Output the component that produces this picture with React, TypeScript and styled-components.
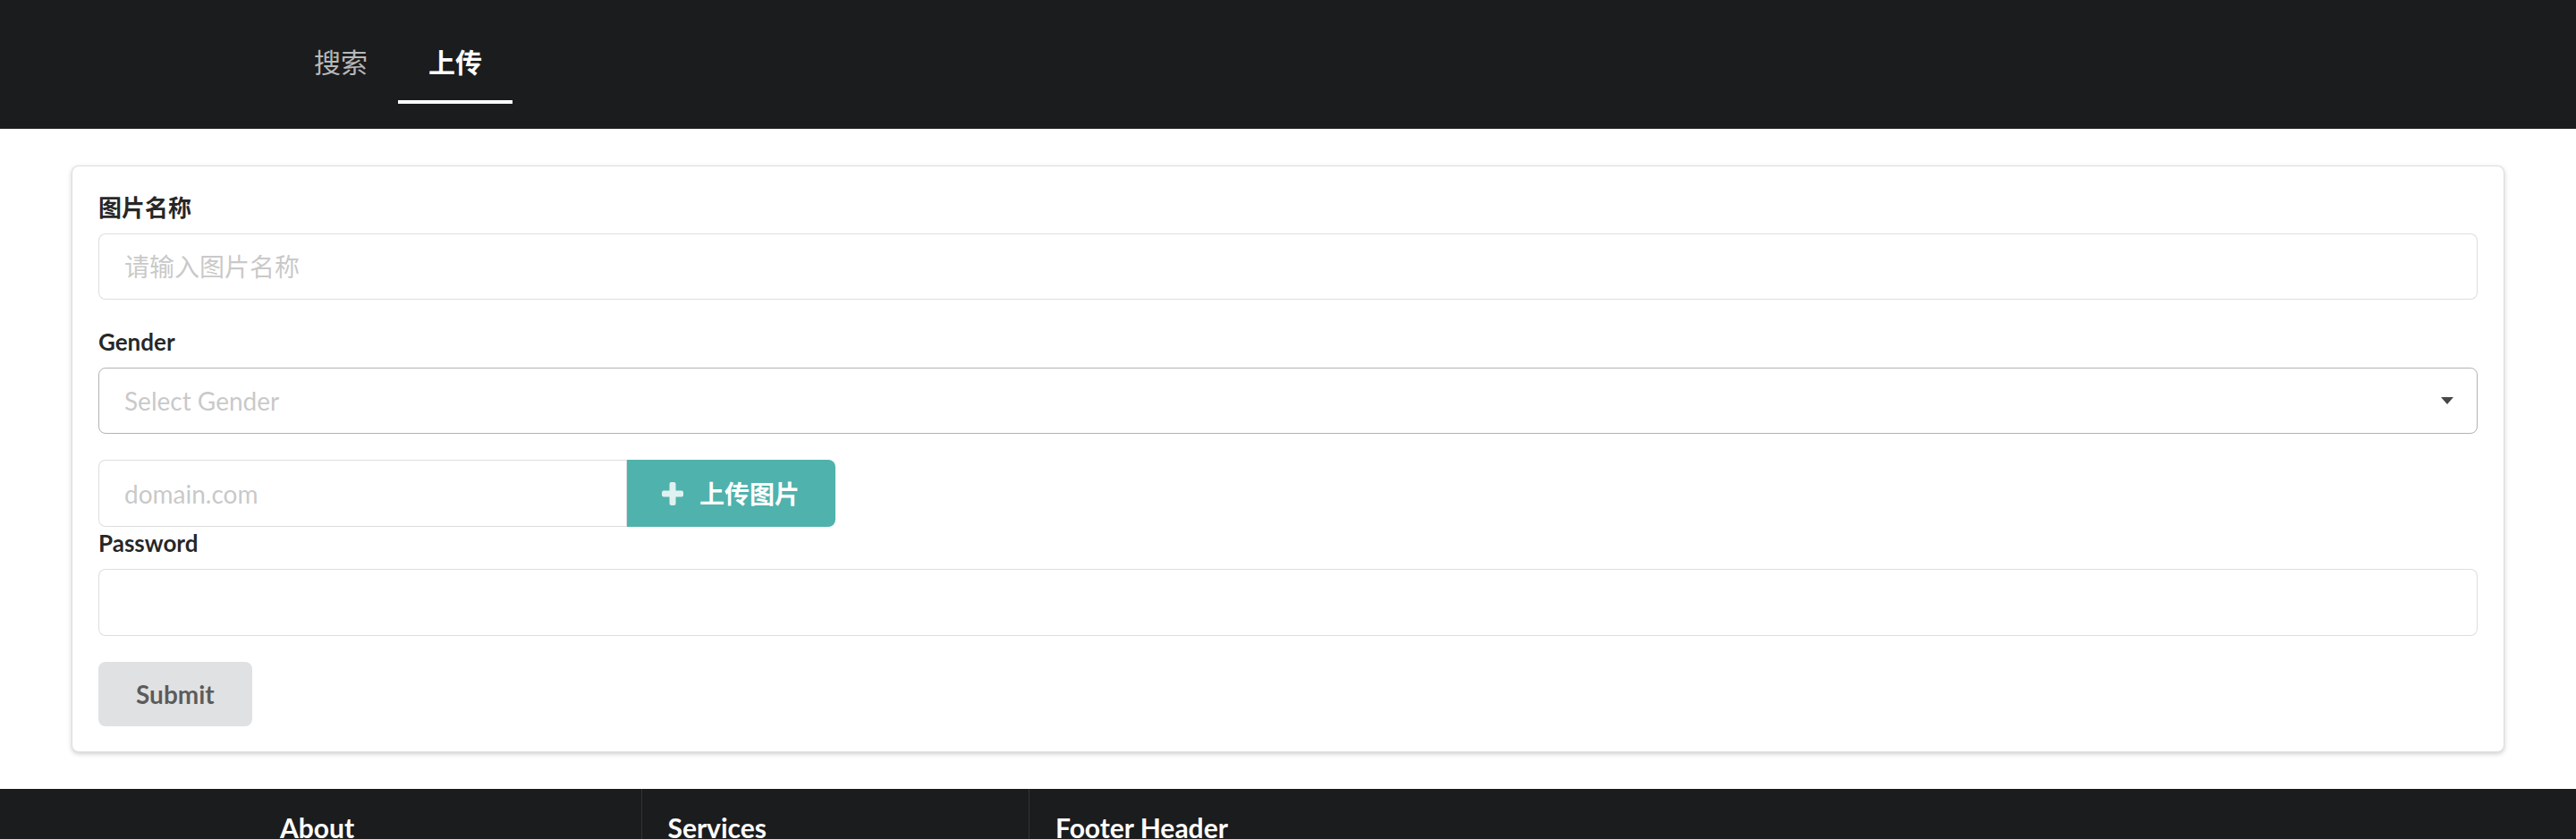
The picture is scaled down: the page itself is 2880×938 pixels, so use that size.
import React from "react";
import styled, { createGlobalStyle } from "styled-components";

const GlobalStyle = createGlobalStyle`
  html, body {
    margin: 0;
    padding: 0;
    background: #ffffff;
  }
  body {
    font-family: Lato, "Noto Sans CJK SC", "Noto Sans", sans-serif;
    font-size: 28px;
    color: rgba(0, 0, 0, 0.87);
  }
  * { box-sizing: border-box; }
`;

const Header = styled.header`
  background: #1b1c1d;
  height: 144px;
`;

const HeaderInner = styled.nav`
  width: 2246px;
  margin: 0 auto;
  display: flex;
  align-items: flex-start;
`;

const Tab = styled.a<{ $active?: boolean }>`
  display: block;
  padding: 54px 34px 28px;
  font-size: 30px;
  line-height: 30px;
  font-weight: ${(p) => (p.$active ? 700 : 400)};
  color: ${(p) => (p.$active ? "#ffffff" : "rgba(255,255,255,0.7)")};
  border-bottom: 4px solid ${(p) => (p.$active ? "#ffffff" : "transparent")};
  cursor: pointer;
`;

const Main = styled.main`
  padding: 41px 80px 41px;
`;

const Card = styled.form`
  background: #fff;
  border: 1px solid rgba(34, 36, 38, 0.15);
  border-radius: 8px;
  box-shadow: 0 2px 4px 0 rgba(34, 36, 38, 0.12), 0 2px 6px 0 rgba(34, 36, 38, 0.1);
  padding: 28px 29px;
  display: flex;
  flex-direction: column;
`;

const Field = styled.div<{ $gap?: number }>`
  display: flex;
  flex-direction: column;
  margin-bottom: ${(p) => (p.$gap ?? 29)}px;
`;

const Label = styled.label`
  display: block;
  font-size: 26px;
  line-height: 37px;
  font-weight: 700;
  color: rgba(0, 0, 0, 0.87);
  margin-bottom: 10px;
`;

const TextInput = styled.input<{ $attached?: boolean; $height?: number }>`
  width: 100%;
  height: ${(p) => p.$height ?? 74}px;
  font-family: inherit;
  font-size: 28px;
  line-height: 34px;
  padding: 19px 28px;
  border: 1px solid rgba(34, 36, 38, 0.15);
  border-radius: ${(p) => (p.$attached ? "8px 0 0 8px" : "8px")};
  color: rgba(0, 0, 0, 0.87);
  background: #fff;
  outline: none;
  &::placeholder {
    color: rgba(191, 191, 191, 0.87);
  }
`;

const Select = styled.div`
  position: relative;
  height: 74px;
  border: 1px solid rgba(34, 36, 38, 0.35);
  border-radius: 8px;
  padding: 22px 59px 22px 28px;
  font-size: 28px;
  line-height: 28px;
  color: rgba(191, 191, 191, 0.87);
  display: flex;
  align-items: center;
`;

const Caret = styled.svg`
  position: absolute;
  right: 26px;
  top: 32px;
  width: 14px;
  height: 9px;
`;

const ActionRow = styled.div`
  display: flex;
  width: 824px;
`;

const TealButton = styled.button`
  flex: 0 0 auto;
  display: flex;
  align-items: center;
  gap: 18px;
  height: 75px;
  padding: 0 40px 0 39px;
  border: none;
  border-radius: 0 8px 8px 0;
  background: #50b2ac;
  color: #ffffff;
  font-family: inherit;
  font-size: 28px;
  font-weight: 700;
  line-height: 28px;
  cursor: pointer;
`;

const PlusIcon = styled.svg`
  width: 24px;
  height: 26px;
  opacity: 0.82;
`;

const SubmitButton = styled.button`
  align-self: flex-start;
  height: 72px;
  padding: 0 42px;
  border: none;
  border-radius: 8px;
  background: #e0e1e2;
  color: rgba(0, 0, 0, 0.6);
  font-family: inherit;
  font-size: 28px;
  font-weight: 700;
  line-height: 28px;
  cursor: pointer;
`;

const Footer = styled.footer`
  background: #1b1c1d;
  min-height: 300px;
`;

const FooterGrid = styled.div`
  width: 2312px;
  margin: 0 auto;
  display: grid;
  grid-template-columns: 3fr 3fr 7fr 3fr;
  min-height: 300px;
`;

const FooterColumn = styled.div<{ $divided?: boolean }>`
  padding: 24px 29px;
  box-shadow: ${(p) => (p.$divided ? "-1px 0 0 0 rgba(255,255,255,0.1)" : "none")};
`;

const FooterHeading = styled.h4`
  margin: 0;
  font-size: 30px;
  line-height: 38px;
  font-weight: 700;
  color: #ffffff;
`;

export default function App() {
  return (
    <>
      <GlobalStyle />
      <Header>
        <HeaderInner>
          <Tab>搜索</Tab>
          <Tab $active>上传</Tab>
        </HeaderInner>
      </Header>
      <Main>
        <Card onSubmit={(e) => e.preventDefault()}>
          <Field>
            <Label>图片名称</Label>
            <TextInput placeholder="请输入图片名称" />
          </Field>
          <Field>
            <Label>Gender</Label>
            <Select>
              Select Gender
              <Caret viewBox="0 0 14 9">
                <path d="M0 0 H14 L7 8 Z" fill="#474747" />
              </Caret>
            </Select>
          </Field>
          <Field $gap={0}>
            <ActionRow>
              <TextInput $attached $height={75} placeholder="domain.com" />
              <TealButton type="button">
                <PlusIcon viewBox="0 0 24 26">
                  <rect x="8.5" y="0" width="7" height="26" rx="2" fill="#ffffff" />
                  <rect x="0" y="9.5" width="24" height="7" rx="2" fill="#ffffff" />
                </PlusIcon>
                上传图片
              </TealButton>
            </ActionRow>
          </Field>
          <Field $gap={29}>
            <Label>Password</Label>
            <TextInput type="password" $height={75} />
          </Field>
          <SubmitButton type="submit">Submit</SubmitButton>
        </Card>
      </Main>
      <Footer>
        <FooterGrid>
          <FooterColumn>
            <FooterHeading>About</FooterHeading>
          </FooterColumn>
          <FooterColumn $divided>
            <FooterHeading>Services</FooterHeading>
          </FooterColumn>
          <FooterColumn $divided>
            <FooterHeading>Footer Header</FooterHeading>
          </FooterColumn>
          <div />
        </FooterGrid>
      </Footer>
    </>
  );
}
